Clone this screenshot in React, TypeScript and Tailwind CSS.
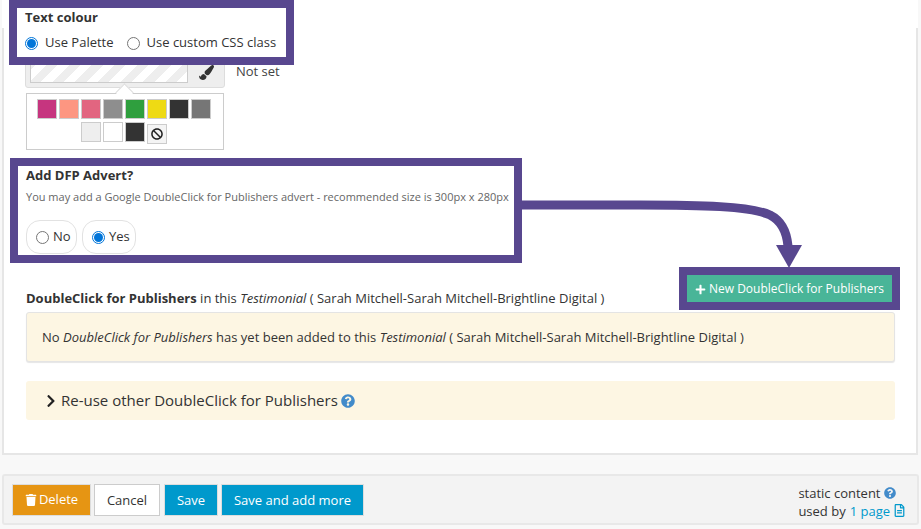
import { FaBan, FaChevronRight, FaPaintBrush, FaPlus, FaQuestionCircle, FaRegFileAlt, FaTrash } from "react-icons/fa";

const palette = ["#c6357f", "#fd9681", "#e26580", "#8e8e8e", "#2f9f3e", "#eeda14", "#333333", "#767676"];
const paletteSecond = ["#eeeeee", "#ffffff", "#333333"];

function Radio({ checked }: { checked?: boolean }) {
  return (
    <span
      className={`inline-flex w-[13px] h-[13px] shrink-0 items-center justify-center rounded-full border bg-white ${
        checked ? "border-[#0075d9]" : "border-[#767676]"
      }`}
    >
      {checked && <span className="w-[9px] h-[9px] rounded-full bg-[#0075d9]" />}
    </span>
  );
}

function Swatch({ color }: { color: string }) {
  return <span className="w-[20px] h-[20px] border border-[#cccccc]" style={{ backgroundColor: color }} />;
}

export default function App() {
  return (
    <div className="relative w-[921px] h-[529px] overflow-hidden bg-[#f8f8f8] font-['Open_Sans',sans-serif] text-[13px] text-[#333333]">
      {/* Top panel */}
      <div className="h-[455px] ml-[2px] mr-[3px] bg-white" />
      <div className="absolute left-[2px] top-[28px] w-[916px] h-[427px] border-2 border-t-0 border-[#e6e6e6] pointer-events-none" />

      {/* Content */}
      <div className="absolute left-0 top-0 w-[921px]">
        {/* Text colour highlight */}
        <div className="relative z-10 ml-[9px] w-[285px] h-[65px] border-[8px] border-[#58478f] bg-white pl-[8px]">
          <div className="font-bold text-[13px] leading-[18px]">Text colour</div>
          <div className="flex items-center mt-[7px] leading-[18px]">
            <span className="flex mt-[2px]"><Radio checked /></span>
            <span className="ml-[7px]">Use Palette</span>
            <span className="flex mt-[2px] ml-[13px]"><Radio /></span>
            <span className="ml-[7px]">Use custom CSS class</span>
          </div>
        </div>

        {/* Picker */}
        <div className="flex ml-[25px] -mt-[9px]">
          <div>
            <div className="flex w-[200px] h-[32px] rounded-[3px] border border-[#dddddd] bg-[#eeeeee]">
              <div className="w-[158px] h-[26px] ml-[4px] border border-[#cccccc] bg-[repeating-linear-gradient(135deg,#eeeeee_0px,#eeeeee_8px,#ffffff_8px,#ffffff_16px)]" />
              <div className="flex-1 flex items-start justify-center pt-[8px]">
                <FaPaintBrush size={15} className="text-[#333333] ml-[1px]" />
              </div>
            </div>
            <div className="relative ml-[1px] w-[198px] h-[57px] mt-[5px] border border-[#cccccc] bg-white pt-[5px]">
              <span className="absolute left-[91px] -top-[8px] w-[13px] h-[13px] rotate-45 border-l border-t border-[#dddddd] bg-white" />
              <div className="flex justify-center gap-[2px] pr-[2px] relative">
                {palette.map((c, i) => (
                  <Swatch key={i} color={c} />
                ))}
              </div>
              <div className="flex justify-center gap-[2px] pr-[2px] mt-[3px] relative">
                {paletteSecond.map((c, i) => (
                  <Swatch key={i} color={c} />
                ))}
                <span className="flex items-center justify-center w-[20px] h-[20px] mt-[2px] border border-[#cccccc] bg-[#f4f4f4]">
                  <FaBan size={12} className="text-[#222222]" />
                </span>
              </div>
            </div>
          </div>
          <span className="ml-[11px] mt-[6px] leading-[18px] text-[#444444]">Not set</span>
        </div>

        {/* Add DFP Advert highlight */}
        <div className="relative z-10 ml-[10px] mt-[8px] w-[512px] h-[105px] border-[8px] border-[#58478f] bg-white pl-[8px]">
          <div className="font-bold leading-[18px]">Add DFP Advert?</div>
          <div className="mt-[5px] text-[11px] leading-[16px] text-[#666666] whitespace-nowrap">
            You may add a Google DoubleClick for Publishers advert - recommended size is 300px x 280px
          </div>
          <div className="flex gap-[5px] mt-[15px]">
            <span className="flex items-center gap-[4px] w-[51px] h-[34px] pl-[9px] rounded-[14px] border border-[#e2e2e2]">
              <Radio />
              No
            </span>
            <span className="flex items-center gap-[4px] w-[54px] h-[34px] pl-[9px] rounded-[14px] border border-[#e2e2e2]">
              <Radio checked />
              Yes
            </span>
          </div>
        </div>

        {/* Heading row */}
        <div className="relative h-[49px] ml-[26px] w-[874px]">
          <div className="absolute left-0 top-[26px] leading-[18px] whitespace-nowrap">
            <b>DoubleClick for Publishers</b> in this <i>Testimonial</i> ( Sarah Mitchell-Sarah Mitchell-Brightline Digital )
          </div>
          <div className="absolute right-0 top-[4px] z-10 border-[8px] border-[#58478f]">
            <button className="flex items-center h-[27px] w-[205px] justify-center pt-[1px] bg-[#49b598] text-[12px] text-white whitespace-nowrap">
              <FaPlus size={11} className="mr-[3px]" />
              New DoubleClick for Publishers
            </button>
          </div>
        </div>

        {/* Notice */}
        <div className="ml-[26px] w-[869px] h-[50px] rounded-[3px] border border-[#e4e4e4] bg-[#fdf6e3] shadow-[0_1px_1px_rgba(0,0,0,0.1)] flex items-center pl-[15px] leading-[18px]">
          <span>
            No <i>DoubleClick for Publishers</i> has yet been added to this <i>Testimonial</i> ( Sarah Mitchell-Sarah Mitchell-Brightline Digital )
          </span>
        </div>

        {/* Re-use */}
        <div className="ml-[26px] mt-[19px] w-[869px] h-[39px] rounded-[3px] bg-[#fdf6e3] flex items-center pl-[18px] text-[15px]">
          <FaChevronRight size={14} className="text-[#222222] mr-[3px]" />
          <span>Re-use other DoubleClick for Publishers</span>
          <FaQuestionCircle size={14} className="ml-[3px] text-[#428bca]" />
        </div>

        {/* Footer */}
        <div className="flex items-center justify-between ml-[2px] mt-[54px] w-[917px] h-[51px] rounded-[3px] border-2 border-[#e8e8e8] bg-[#f3f3f3] pl-[8px] pr-[11px]">
          <div className="flex gap-[3px]">
            <button className="flex items-center h-[32px] w-[79px] justify-center pt-[1px] border border-[#dddddd] bg-[#e69513] text-white">
              <FaTrash size={12} className="mr-[2px]" />
              Delete
            </button>
            <button className="h-[32px] w-[66px] pt-[2px] border border-[#cccccc] bg-white">Cancel</button>
            <button className="ml-[1px] h-[32px] w-[54px] pt-[2px] border border-[#dddddd] bg-[#0099cc] text-white">Save</button>
            <button className="h-[32px] w-[143px] pt-[2px] border border-[#dddddd] bg-[#0099cc] text-white">Save and add more</button>
          </div>
          <div className="leading-[18px] pt-[4px]">
            <div className="flex items-center">
              static content
              <FaQuestionCircle size={12} className="ml-[3px] text-[#428bca]" />
            </div>
            <div className="flex items-center">
              used by <span className="ml-[4px] text-[#0099cc]">1 page</span>
              <FaRegFileAlt size={13} className="ml-[3px] text-[#0099cc]" />
            </div>
          </div>
        </div>
      </div>

      {/* Arrow annotation */}
      <svg className="absolute left-0 top-0 z-20 pointer-events-none" width="921" height="529">
        <path d="M522 205H640C700 205 750 206 770 215C784 222 787 235 788 246" fill="none" stroke="#58478f" strokeWidth="9" />
        <path d="M776 245H802L789 268Z" fill="#58478f" />
      </svg>
    </div>
  );
}
